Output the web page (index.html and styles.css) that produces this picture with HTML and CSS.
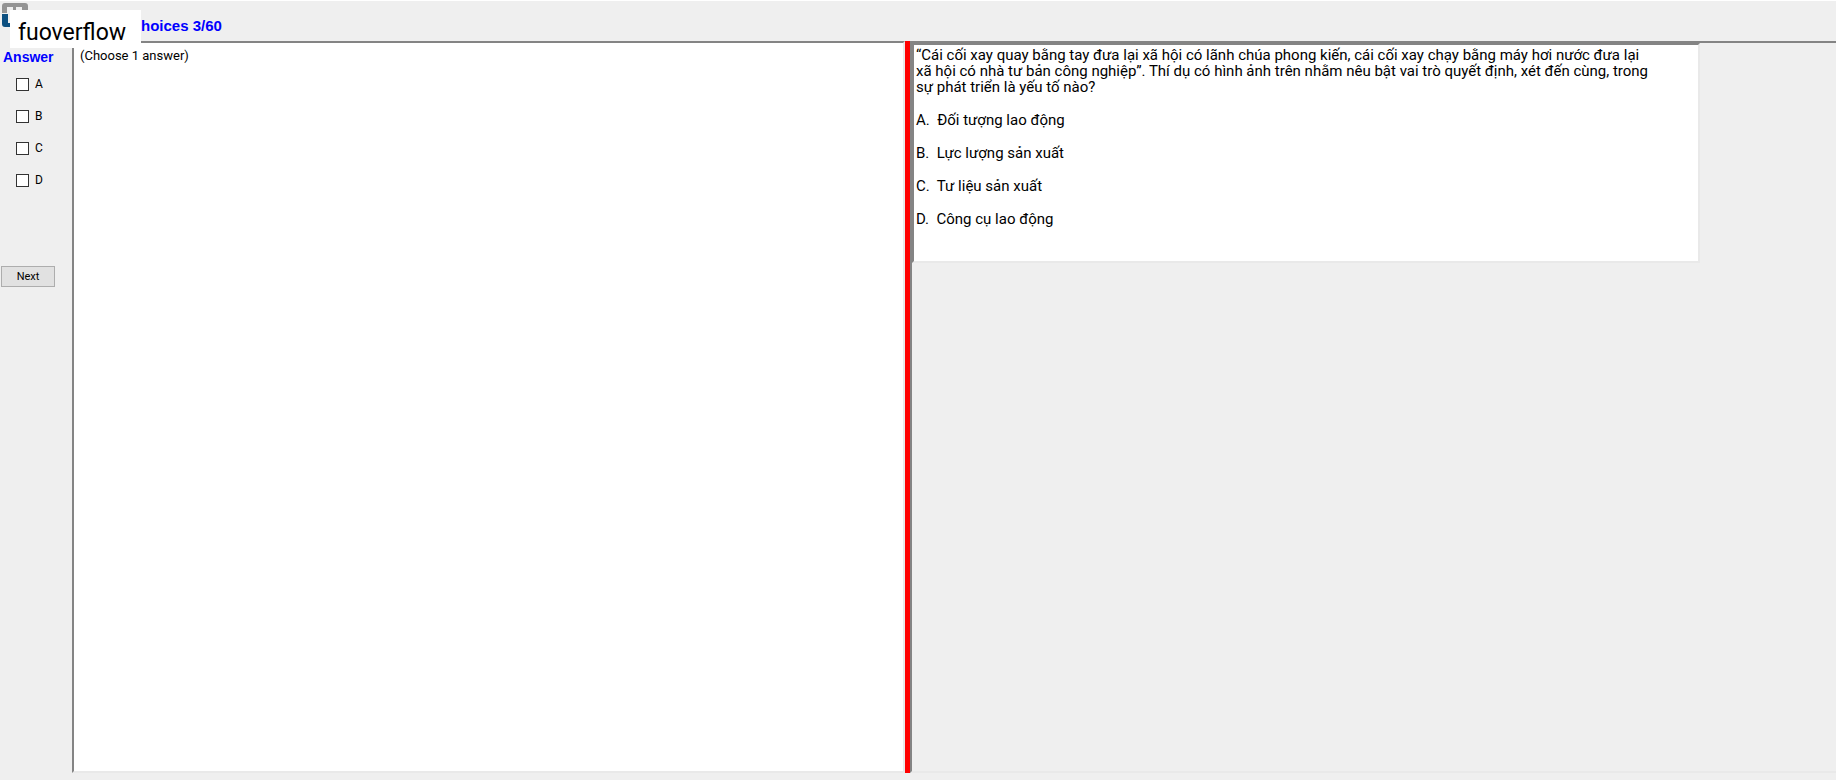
FILE: index.html
```html
<!DOCTYPE html>
<html lang="vi">
<head>
<meta charset="utf-8">
<title>Answer sheet</title>
<link rel="stylesheet" href="styles.css">
</head>
<body>
<header class="topbar">
  <svg class="logo" width="26" height="26" viewBox="0 0 26 26" aria-hidden="true">
    <path fill="#949494" d="M0 10V3Q0 0 3 0H23Q26 0 26 3V24H20V4H14V10H11V4H5V10Z"/>
    <path fill="#0c4f80" d="M0 11H6V20H25V24H3Q0 24 0 21Z"/>
  </svg>
  <h1 class="title">hoices 3/60</h1>
  <div class="watermark">fuoverflow</div>
</header>
<main class="workspace">
  <form class="answers">
    <h2 class="answers-title">Answer</h2>
    <label class="option"><input class="box" type="checkbox" name="answer" value="A">A</label>
    <label class="option"><input class="box" type="checkbox" name="answer" value="B">B</label>
    <label class="option"><input class="box" type="checkbox" name="answer" value="C">C</label>
    <label class="option"><input class="box" type="checkbox" name="answer" value="D">D</label>
    <button class="next" type="button">Next</button>
  </form>
  <section class="sheet">(Choose 1 answer)</section>
  <div class="splitter"></div>
  <section class="viewer">
    <article class="question">
      <p>“Cái cối xay quay bằng tay đưa lại xã hội có lãnh chúa phong kiến, cái cối xay chạy bằng máy hơi nước đưa lại<br>xã hội có nhà tư bản công nghiệp”. Thí dụ có hình ảnh trên nhằm nêu bật vai trò quyết định, xét đến cùng, trong<br>sự phát triển là yếu tố nào?</p>
      <p>A.&nbsp; Đối tượng lao động</p>
      <p>B.&nbsp; Lực lượng sản xuất</p>
      <p>C.&nbsp; Tư liệu sản xuất</p>
      <p>D.&nbsp; Công cụ lao động</p>
    </article>
  </section>
</main>
</body>
</html>
```
FILE: styles.css
```css
* { box-sizing: border-box; }

body {
  display: flex;
  flex-direction: column;
  height: 100vh;
  margin: 0;
  overflow: hidden;
  background: #efefef;
  color: #000;
  font-family: "Liberation Sans", Arial, sans-serif;
}

h1, h2, p { margin: 0; }

.topbar {
  position: relative;
  flex: none;
  height: 41px;
  padding: 16px 0 0 141px;
  border-top: 1px solid #fff;
}

.logo {
  position: absolute;
  top: 2px;
  left: 2px;
}

.title {
  color: #00f;
  font-size: 15px;
  line-height: 17px;
}

.watermark {
  position: absolute;
  top: 9px;
  left: 10px;
  z-index: 1;
  width: 131px;
  height: 38px;
  padding-left: 8px;
  background: #fff;
  font-family: Roboto, sans-serif;
  font-size: 23px;
  line-height: 46px;
}

.workspace {
  display: grid;
  flex: 1;
  grid-template-columns: 72px minmax(0, 833fr) 5px minmax(0, 926fr);
  min-height: 0;
  padding-bottom: 7px;
}

.answers {
  display: flex;
  flex-direction: column;
  align-items: flex-start;
  padding-top: 8px;
}

.answers-title {
  padding-left: 3px;
  color: #00f;
  font-size: 14px;
  line-height: 16px;
}

.option {
  display: flex;
  align-items: center;
  gap: 6px;
  height: 32px;
  padding-left: 16px;
  font: 12px/16px Roboto, sans-serif;
}

.answers-title + .option { margin-top: 3px; }

.box {
  width: 13px;
  height: 13px;
  margin: 0;
  border: 1px solid #333;
  background: #fff;
  appearance: none;
}

.box:checked { background: #333; }

.next {
  width: 54px;
  height: 21px;
  margin: 70px 0 0 1px;
  padding: 0;
  border: 1px solid #adadad;
  background: #e1e1e1;
  color: #000;
  font: 11px/16px Roboto, sans-serif;
}

.sheet,
.viewer,
.question {
  border: 2px solid;
  border-color: #848484 #e9e9e9 #e9e9e9 #848484;
}

.sheet {
  padding: 5px 6px;
  background: #fff;
  font: 13px/16px Roboto, sans-serif;
}

.splitter {
  background: #f00;
  cursor: col-resize;
}

.viewer { border-right: 0; }

.question {
  width: 788px;
  max-width: 100%;
  height: 220px;
  padding: 2px;
  background: #fff;
  font: 15px/16px Roboto, sans-serif;
}

.question p + p { margin-top: 17px; }
```
